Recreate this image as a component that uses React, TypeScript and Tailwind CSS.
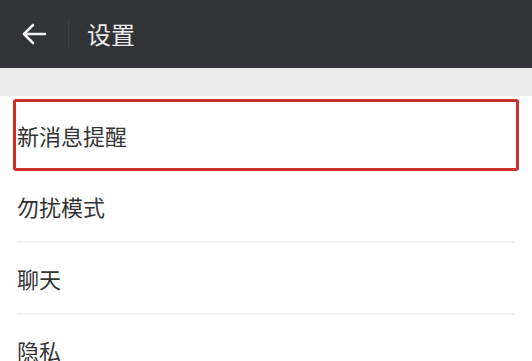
import React from 'react'

const items = ['勿扰模式', '聊天', '隐私']

export default function App() {
  return (
    <div
      className="w-[532px] h-[361px] overflow-hidden bg-white"
      style={{ fontFamily: '"Noto Sans CJK SC", "Noto Sans", sans-serif' }}
    >
      {/* top bar */}
      <div className="h-[68px] bg-[#323337] flex items-center">
        <div className="w-[68px] h-full flex items-center justify-center">
          <svg width="26" height="24" viewBox="0 0 26 24" fill="none" stroke="#f2f2f2" strokeWidth={2.6} strokeLinecap="round" strokeLinejoin="round">
            <path d="M24 12H3M12 3l-9 9 9 9" />
          </svg>
        </div>
        <div className="w-[1px] h-[30px] bg-[#3d3e42]" />
        <span className="ml-[18px] text-[24px] text-[#ececec] leading-none">设置</span>
      </div>

      <div className="h-[28px] bg-[#ebebeb]" />

      <div className="bg-white">
        <div className="ml-[13px] mt-[3px] w-[506px] h-[72px] border-[3px] border-[#cf302c] rounded-[3px] flex items-center pl-[1px]">
          <span className="text-[22px] text-[#333333] leading-none">新消息提醒</span>
        </div>
        {items.map((t, i) => (
          <div key={t}>
            {i > 0 && <div className="mx-[17px] h-[2px] bg-[#f0f0f0]" />}
            <div className="h-[70px] flex items-center pl-[17px]">
              <span className="text-[22px] text-[#333333] leading-none">{t}</span>
            </div>
          </div>
        ))}
      </div>
    </div>
  )
}
